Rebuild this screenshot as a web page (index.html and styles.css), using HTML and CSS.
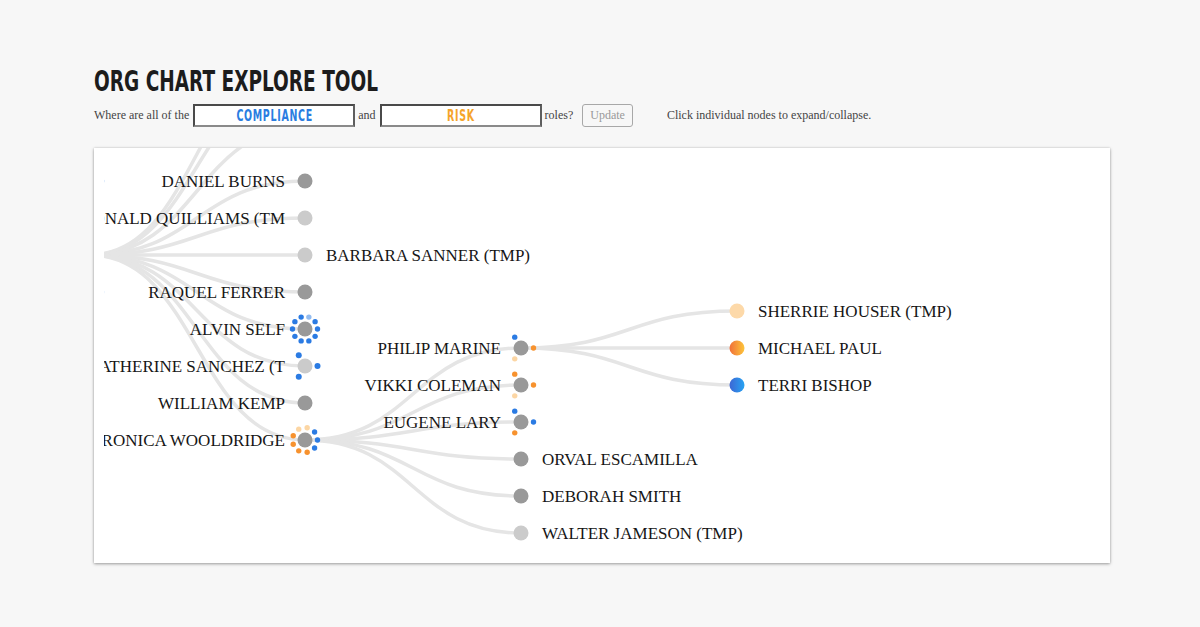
FILE: index.html
```html
<!DOCTYPE html>
<html lang="en">
<head>
<meta charset="utf-8">
<title>Org Chart Explore Tool</title>
<link rel="stylesheet" href="styles.css">
</head>
<body>
<main class="page">
  <h1 class="title"><span class="title-text">ORG CHART EXPLORE TOOL</span></h1>
  <div class="controls">
    <span class="lbl">Where are all of the</span>
    <div class="role role-compliance"><span class="role-text">COMPLIANCE</span></div>
    <span class="lbl">and</span>
    <div class="role role-risk"><span class="role-text">RISK</span></div>
    <span class="lbl">roles?</span>
    <button class="update" type="button">Update</button>
    <span class="hint">Click individual nodes to expand/collapse.</span>
  </div>
  <section class="chart">
    <svg class="tree" width="1016" height="415" viewBox="0 0 1016 415">
      <defs>
        <clipPath id="view"><rect x="10" y="0" width="1006" height="415"/></clipPath>
        <linearGradient id="g-risk" x1="0" y1="0" x2="1" y2="0">
          <stop offset="0" stop-color="#f0703a"/>
          <stop offset="1" stop-color="#fdc53a"/>
        </linearGradient>
        <linearGradient id="g-comp" x1="0" y1="0" x2="1" y2="0">
          <stop offset="0" stop-color="#3d66d4"/>
          <stop offset="1" stop-color="#27a3f2"/>
        </linearGradient>
      </defs>
      <g clip-path="url(#view)">
        <g class="links">
          <path class="link" d="M-5,107C103,107 103,-95 211,-95"/>
          <path class="link" d="M-5,107C103,107 103,-70 211,-70"/>
          <path class="link" d="M-5,107C103,107 103,-21 211,-21"/>
          <path class="link" d="M-5,107C103,107 103,33 211,33"/>
          <path class="link" d="M-5,107C103,107 103,70 211,70"/>
          <path class="link" d="M-5,107C103,107 103,107 211,107"/>
          <path class="link" d="M-5,107C103,107 103,144 211,144"/>
          <path class="link" d="M-5,107C103,107 103,181 211,181"/>
          <path class="link" d="M-5,107C103,107 103,218 211,218"/>
          <path class="link" d="M-5,107C103,107 103,255 211,255"/>
          <path class="link" d="M-5,107C103,107 103,292 211,292"/>
          <path class="link" d="M211,292C319,292 319,200 427,200"/>
          <path class="link" d="M211,292C319,292 319,237 427,237"/>
          <path class="link" d="M211,292C319,292 319,274 427,274"/>
          <path class="link" d="M211,292C319,292 319,311 427,311"/>
          <path class="link" d="M211,292C319,292 319,348 427,348"/>
          <path class="link" d="M211,292C319,292 319,385 427,385"/>
          <path class="link" d="M427,200C535,200 535,163 643,163"/>
          <path class="link" d="M427,200C535,200 535,200 643,200"/>
          <path class="link" d="M427,200C535,200 535,237 643,237"/>
        </g>

        <g class="labels">
          <text class="name" x="191" y="39" text-anchor="end">DANIEL BURNS</text>
          <text class="name" x="191" y="76" text-anchor="end">DONALD QUILLIAMS (TM</text>
          <text class="name" x="232" y="113">BARBARA SANNER (TMP)</text>
          <text class="name" x="191" y="150" text-anchor="end">RAQUEL FERRER</text>
          <text class="name" x="191" y="187" text-anchor="end">ALVIN SELF</text>
          <text class="name" x="191" y="224" text-anchor="end">CATHERINE SANCHEZ (T</text>
          <text class="name" x="191" y="261" text-anchor="end">WILLIAM KEMP</text>
          <text class="name" x="191" y="298" text-anchor="end">VERONICA WOOLDRIDGE</text>
          <text class="name" x="407" y="206" text-anchor="end">PHILIP MARINE</text>
          <text class="name" x="407" y="243" text-anchor="end">VIKKI COLEMAN</text>
          <text class="name" x="407" y="280" text-anchor="end">EUGENE LARY</text>
          <text class="name" x="448" y="317">ORVAL ESCAMILLA</text>
          <text class="name" x="448" y="354">DEBORAH SMITH</text>
          <text class="name" x="448" y="391">WALTER JAMESON (TMP)</text>
          <text class="name" x="664" y="169">SHERRIE HOUSER (TMP)</text>
          <text class="name" x="664" y="206">MICHAEL PAUL</text>
          <text class="name" x="664" y="243">TERRI BISHOP</text>
        </g>

        <g class="nodes">
          <circle class="dot d-comp" cx="7.5" cy="33" r="2.7"/>
          <circle class="dot d-comp-tmp" cx="7.5" cy="144" r="2.7"/>

          <circle class="node n-staff" cx="211" cy="33" r="7.5"/>
          <circle class="node n-tmp" cx="211" cy="70" r="7.5"/>
          <circle class="node n-tmp" cx="211" cy="107" r="7.5"/>
          <circle class="node n-staff" cx="211" cy="144" r="7.5"/>

          <circle class="node n-staff" cx="211" cy="181" r="7.5"/>
          <circle class="dot d-comp" cx="223.5" cy="181" r="2.7"/>
          <circle class="dot d-comp" cx="221.11" cy="188.35" r="2.7"/>
          <circle class="dot d-comp" cx="214.86" cy="192.89" r="2.7"/>
          <circle class="dot d-comp" cx="207.14" cy="192.89" r="2.7"/>
          <circle class="dot d-comp" cx="200.89" cy="188.35" r="2.7"/>
          <circle class="dot d-comp" cx="198.5" cy="181" r="2.7"/>
          <circle class="dot d-comp" cx="200.89" cy="173.65" r="2.7"/>
          <circle class="dot d-comp" cx="207.14" cy="169.11" r="2.7"/>
          <circle class="dot d-comp-tmp" cx="214.86" cy="169.11" r="2.7"/>
          <circle class="dot d-comp" cx="221.11" cy="173.65" r="2.7"/>

          <circle class="node n-tmp" cx="211" cy="218" r="7.5"/>
          <circle class="dot d-comp" cx="223.5" cy="218" r="3"/>
          <circle class="dot d-comp" cx="204.75" cy="228.83" r="3"/>
          <circle class="dot d-comp" cx="204.75" cy="207.17" r="3"/>

          <circle class="node n-staff" cx="211" cy="255" r="7.5"/>

          <circle class="node n-staff" cx="211" cy="292" r="7.5"/>
          <circle class="dot d-comp" cx="223.5" cy="292" r="2.7"/>
          <circle class="dot d-comp" cx="220.58" cy="300.03" r="2.7"/>
          <circle class="dot d-risk" cx="213.17" cy="304.31" r="2.7"/>
          <circle class="dot d-risk" cx="204.75" cy="302.83" r="2.7"/>
          <circle class="dot d-risk" cx="199.25" cy="296.28" r="2.7"/>
          <circle class="dot d-risk" cx="199.25" cy="287.72" r="2.7"/>
          <circle class="dot d-risk-tmp" cx="204.75" cy="281.17" r="2.7"/>
          <circle class="dot d-risk-tmp" cx="213.17" cy="279.69" r="2.7"/>
          <circle class="dot d-comp" cx="220.58" cy="283.97" r="2.7"/>

          <circle class="node n-staff" cx="427" cy="200" r="7.5"/>
          <circle class="dot d-risk" cx="439.5" cy="200" r="2.7"/>
          <circle class="dot d-risk-tmp" cx="420.75" cy="210.83" r="2.7"/>
          <circle class="dot d-comp" cx="420.75" cy="189.17" r="2.7"/>

          <circle class="node n-staff" cx="427" cy="237" r="7.5"/>
          <circle class="dot d-risk" cx="439.5" cy="237" r="2.7"/>
          <circle class="dot d-risk-tmp" cx="420.75" cy="247.83" r="2.7"/>
          <circle class="dot d-risk" cx="420.75" cy="226.17" r="2.7"/>

          <circle class="node n-staff" cx="427" cy="274" r="7.5"/>
          <circle class="dot d-comp" cx="439.5" cy="274" r="2.7"/>
          <circle class="dot d-risk" cx="420.75" cy="284.83" r="2.7"/>
          <circle class="dot d-comp" cx="420.75" cy="263.17" r="2.7"/>

          <circle class="node n-staff" cx="427" cy="311" r="7.5"/>
          <circle class="node n-staff" cx="427" cy="348" r="7.5"/>
          <circle class="node n-tmp" cx="427" cy="385" r="7.5"/>

          <circle class="node n-risk-tmp" cx="643" cy="163" r="7.5"/>
          <circle class="node n-risk" cx="643" cy="200" r="7.5"/>
          <circle class="node n-comp" cx="643" cy="237" r="7.5"/>
        </g>
      </g>
    </svg>
  </section>
</main>
</body>
</html>
```

FILE: styles.css
```css
html, body {
  margin: 0;
  padding: 0;
}

body {
  background: #f7f7f7;
  color: #444;
  font-family: "Liberation Serif", "DejaVu Serif", serif;
  min-height: 627px;
}

.page {
  padding: 63px 0 40px 94px;
}

.title {
  margin: 0;
  height: 36px;
  line-height: 36px;
  font-family: "DejaVu Sans Condensed", "DejaVu Sans", "Liberation Sans", sans-serif;
  font-weight: 700;
  font-size: 29px;
  color: #1c1c1c;
  white-space: nowrap;
}

.title-text {
  display: inline-block;
  transform: scaleX(0.71);
  transform-origin: left center;
}

.controls {
  margin-top: 5px;
  height: 23px;
  display: flex;
  align-items: center;
  gap: 3px;
  font-size: 12px;
  color: #444;
}

.lbl,
.hint {
  white-space: nowrap;
}

.role {
  box-sizing: border-box;
  width: 162px;
  height: 23px;
  margin-left: 1px;
  display: flex;
  align-items: center;
  justify-content: center;
  background: #fff;
  border: 2px solid;
  border-color: #4a4a4a #5e5e5e #8a8a8a #4a4a4a;
  font-family: "DejaVu Sans Condensed", "DejaVu Sans", "Liberation Sans", sans-serif;
  font-weight: 700;
  font-size: 15px;
  letter-spacing: 1px;
}

.role-text {
  display: inline-block;
  transform: scaleX(0.7);
  transform-origin: center;
  white-space: nowrap;
}

.role-compliance {
  color: #2a7de1;
}

.role-risk {
  color: #f5a42a;
}

.update {
  box-sizing: border-box;
  height: 23px;
  margin: 0 0 0 6px;
  padding: 0 7px;
  background: transparent;
  border: 1px solid #a8a8a8;
  border-radius: 3px;
  color: #999;
  font-family: "Liberation Serif", "DejaVu Serif", serif;
  font-size: 12px;
  line-height: 19px;
}

.hint {
  margin-left: 31px;
}

.chart {
  margin-top: 21px;
  width: 1016px;
  height: 415px;
  background: #fff;
  box-shadow: 0 1px 3px rgba(0, 0, 0, 0.35), 0 0 2px rgba(0, 0, 0, 0.12);
}

.tree {
  display: block;
}

.link {
  fill: none;
  stroke: #e5e5e5;
  stroke-width: 3.5px;
}

.name {
  font-family: "Liberation Serif", "DejaVu Serif", serif;
  font-size: 17px;
  fill: #161616;
}

.n-staff { fill: #999; }
.n-tmp { fill: #cbcbcb; }
.n-risk-tmp { fill: #fdd9a9; }
.n-risk { fill: url(#g-risk); }
.n-comp { fill: url(#g-comp); }

.d-comp { fill: #2b7be3; }
.d-comp-tmp { fill: #93bcf0; }
.d-risk { fill: #f7922e; }
.d-risk-tmp { fill: #fcd6a4; }
```
